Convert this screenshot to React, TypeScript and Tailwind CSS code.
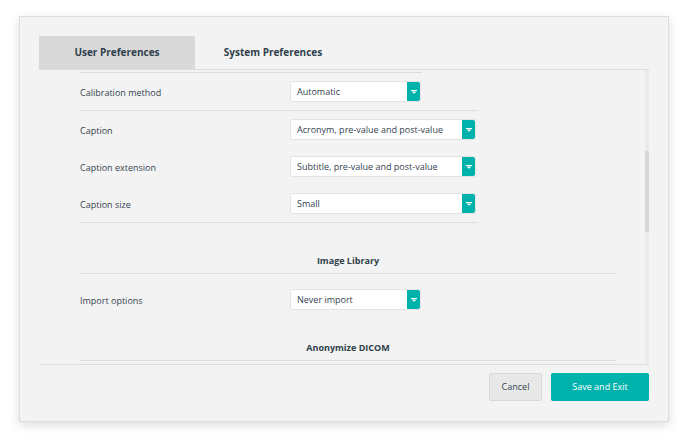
import React from "react";

const font = { fontFamily: '"Open Sans", "Liberation Sans", sans-serif' };

function Caret() {
  return (
    <svg width="6" height="4" viewBox="0 0 6 4">
      <rect x="0" y="0" width="6" height="1" fill="#fff" />
      <path d="M0.5 1.5 H5.5 L3 3.8 Z" fill="#fff" />
    </svg>
  );
}

function Select({ value, width }: { value: string; width: string }) {
  return (
    <div className={`flex h-[21px] ${width} rounded-[2px] border border-[#e3e3e3] bg-white`}>
      <div className="flex flex-1 items-center pl-[6px] text-[9px] text-[#34434f]">{value}</div>
      <div className="flex w-[13px] items-center justify-center rounded-r-[2px] bg-[#00b2ac]">
        <Caret />
      </div>
    </div>
  );
}

function Row({ label, value, width }: { label: string; value: string; width: string }) {
  return (
    <div className="flex h-[37px] items-center">
      <div className="w-[210px] pt-[2px] text-[9px] text-[#34434f]">{label}</div>
      <Select value={value} width={width} />
    </div>
  );
}

function Line({ width }: { width: string }) {
  return <div className={`h-px ${width} bg-[#dcdcdc]`} />;
}

function Heading({ title, height }: { title: string; height: string }) {
  return (
    <div className={`flex ${height} w-[536px] items-end justify-center pb-[6px] text-[9px] font-bold leading-[12px] text-[#2f3f4c]`}>
      {title}
    </div>
  );
}

export default function App() {
  return (
    <div className="h-[444px] w-[688px] bg-white pl-[19px] pt-[16px]" style={font}>
      <div className="flex h-[406px] w-[650px] flex-col border border-[#dedede] bg-[#f3f3f3] px-[19px] pt-[19px] shadow-[0_3px_10px_rgba(0,0,0,0.14)]">
        {/* Tabs */}
        <div className="flex h-[33px]">
          <div className="flex w-[156px] items-center justify-center bg-[#d9d9d9] text-[10px] font-bold text-[#2f3f4c]">
            User Preferences
          </div>
          <div className="flex w-[156px] items-center justify-center text-[10px] font-bold text-[#2f3f4c]">
            System Preferences
          </div>
        </div>

        {/* Scroll panel */}
        <div className="flex h-[296px] border-y border-[#dddddd]">
          <div className="flex-1 overflow-hidden pl-[41px] pt-[2px]">
            <Line width="w-[342px]" />
            <Row label="Calibration method" value="Automatic" width="w-[131px]" />
            <Line width="w-[397px]" />
            <Row label="Caption" value="Acronym, pre-value and post-value" width="w-[186px]" />
            <Row label="Caption extension" value="Subtitle, pre-value and post-value" width="w-[186px]" />
            <Row label="Caption size" value="Small" width="w-[186px]" />
            <Line width="w-[397px]" />
            <Heading title="Image Library" height="h-[50px]" />
            <Line width="w-[536px]" />
            <div className="pt-[7px]">
              <Row label="Import options" value="Never import" width="w-[131px]" />
            </div>
            <Heading title="Anonymize DICOM" height="h-[42px]" />
            <Line width="w-[536px]" />
          </div>
          <div className="flex w-[4px] flex-col bg-[#e9ecef]">
            <div className="mt-[81px] h-[81px] bg-[#d6d6d6]" />
          </div>
        </div>

        {/* Footer */}
        <div className="flex justify-end gap-[9px] pt-[8px]">
          <button className="h-[28px] w-[53px] rounded-[2px] border border-[#d9d9d9] bg-[#e8e8e8] text-[9px] text-[#34434f]">
            Cancel
          </button>
          <button className="h-[28px] w-[98px] rounded-[2px] bg-[#00b2ac] text-[9px] text-white">
            Save and Exit
          </button>
        </div>
      </div>
    </div>
  );
}
